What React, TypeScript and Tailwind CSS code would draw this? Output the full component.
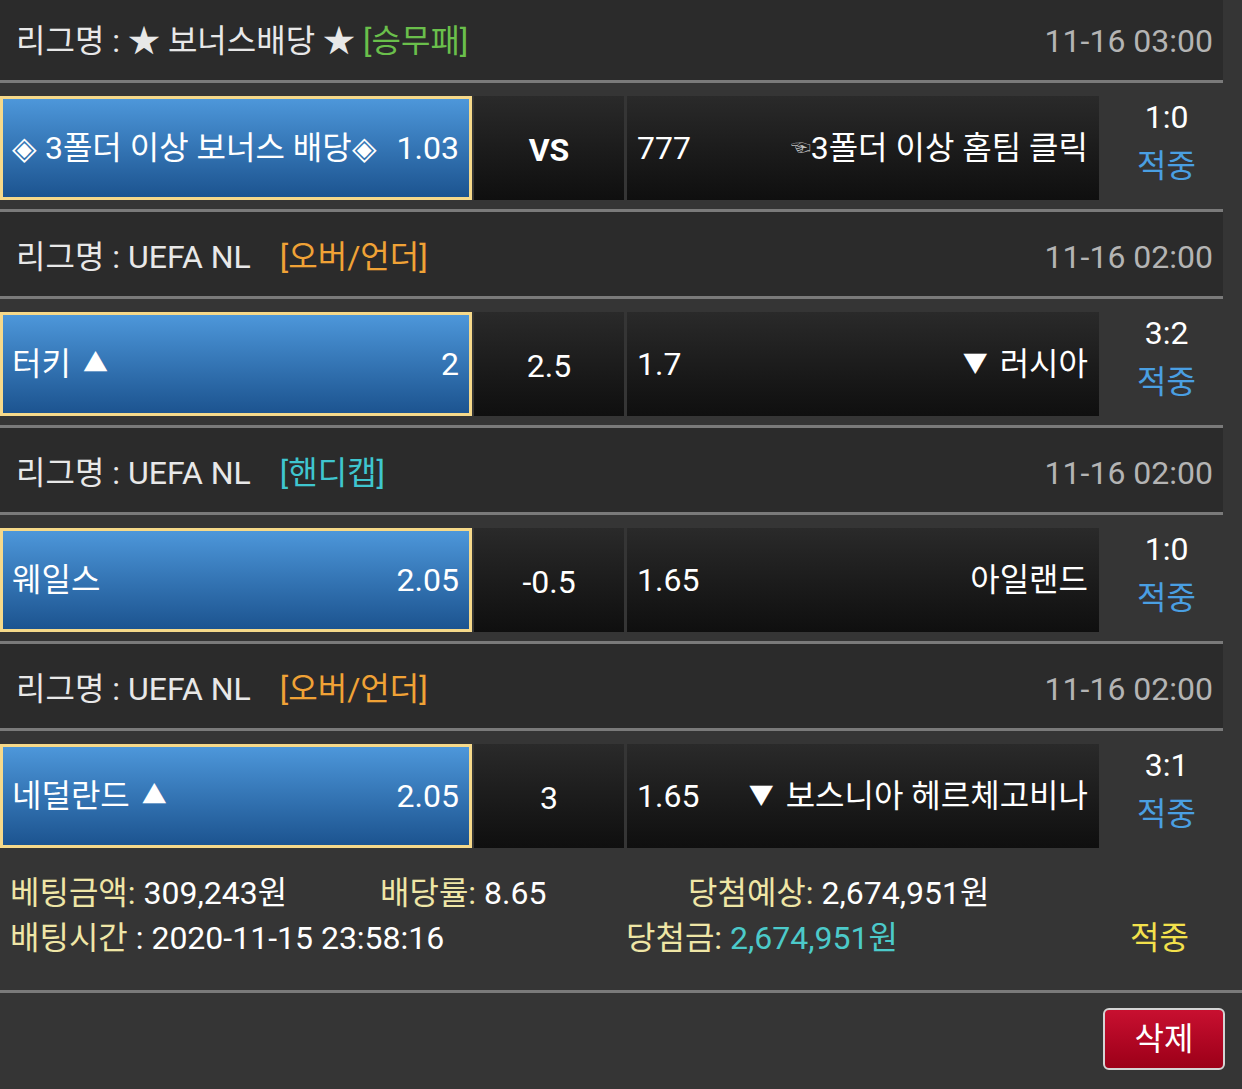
const font = "font-['Roboto','Noto_Sans_CJK_KR',sans-serif]"

type Match = {
  league: string
  tag: string
  tagColor: string
  tagGap: string
  date: string
  home: React.ReactNode
  homeOdds: string
  mid: string
  midBold?: boolean
  awayOdds: string
  away: React.ReactNode
  score: string
}

function Up() {
  return <span className="text-[25px] ml-[12px]">▲</span>
}

function Down() {
  return <span className="text-[25px] mr-[12px]">▼</span>
}

const matches: Match[] = [
  {
    league: '리그명 : ★ 보너스배당 ★',
    tag: '[승무패]',
    tagColor: 'text-[#6abf4b]',
    tagGap: 'ml-[8px]',
    date: '11-16 03:00',
    home: '◈ 3폴더 이상 보너스 배당◈',
    homeOdds: '1.03',
    mid: 'VS',
    midBold: true,
    awayOdds: '777',
    away: (
      <>
        <span className="text-[20px] text-[#bdbdbd]">☜</span>3폴더 이상 홈팀 클릭
      </>
    ),
    score: '1:0',
  },
  {
    league: '리그명 : UEFA NL',
    tag: '[오버/언더]',
    tagColor: 'text-[#f0a236]',
    tagGap: 'ml-[29px]',
    date: '11-16 02:00',
    home: (
      <>
        터키
        <Up />
      </>
    ),
    homeOdds: '2',
    mid: '2.5',
    awayOdds: '1.7',
    away: (
      <>
        <Down />
        러시아
      </>
    ),
    score: '3:2',
  },
  {
    league: '리그명 : UEFA NL',
    tag: '[핸디캡]',
    tagColor: 'text-[#3fc6cf]',
    tagGap: 'ml-[29px]',
    date: '11-16 02:00',
    home: '웨일스',
    homeOdds: '2.05',
    mid: '-0.5',
    awayOdds: '1.65',
    away: '아일랜드',
    score: '1:0',
  },
  {
    league: '리그명 : UEFA NL',
    tag: '[오버/언더]',
    tagColor: 'text-[#f0a236]',
    tagGap: 'ml-[29px]',
    date: '11-16 02:00',
    home: (
      <>
        네덜란드
        <Up />
      </>
    ),
    homeOdds: '2.05',
    mid: '3',
    awayOdds: '1.65',
    away: (
      <>
        <Down />
        보스니아 헤르체고비나
      </>
    ),
    score: '3:1',
  },
]

function LeagueHeader({ m }: { m: Match }) {
  return (
    <div className="w-[1223px] h-[90px] border-y-[3px] border-[#7a7a7a] bg-[#2b2b2b] flex items-center justify-between pl-[16px] pr-[10px] pt-[6px]">
      <div className="flex items-center text-[#e8e8e8]">
        <span>{m.league}</span>
        <span className={`${m.tagGap} ${m.tagColor}`}>{m.tag}</span>
      </div>
      <span className="text-[#b4b4b4]">{m.date}</span>
    </div>
  )
}

function MatchRow({ m }: { m: Match }) {
  return (
    <div className="flex items-start pt-[13px] pb-[9px]">
      <div className="w-[472px] h-[104px] border-[3px] border-[#f6d98a] bg-gradient-to-b from-[#4d97da] to-[#1c5490] flex items-center justify-between pl-[9px] pr-[10px] text-white">
        <span className="flex items-center">{m.home}</span>
        <span>{m.homeOdds}</span>
      </div>
      <div
        className={`ml-[2px] w-[150px] h-[104px] bg-gradient-to-b from-[#2a2a2a] to-[#0f0f0f] flex items-center justify-center text-white pt-[4px] ${
          m.midBold ? 'font-bold' : ''
        }`}
      >
        {m.mid}
      </div>
      <div className="ml-[3px] w-[472px] h-[104px] bg-gradient-to-b from-[#2a2a2a] to-[#0f0f0f] flex items-center justify-between pl-[10px] pr-[11px] text-white">
        <span>{m.awayOdds}</span>
        <span className="flex items-center">{m.away}</span>
      </div>
      <div className="flex-1 -mt-[2px] pr-[8px] flex flex-col items-center leading-[46px]">
        <span className="text-white">{m.score}</span>
        <span className="text-[#4a9fe2] mt-[3px]">적중</span>
      </div>
    </div>
  )
}

export default function App() {
  return (
    <div className={`min-h-screen w-[1242px] bg-[#353535] overflow-hidden text-[32px] ${font}`}>
      <div className="-mt-[7px]">
        {matches.map((m, i) => (
          <div key={i}>
            <LeagueHeader m={m} />
            <MatchRow m={m} />
          </div>
        ))}
      </div>

      <div className="pl-[10px] pt-[14px] pb-[29px] leading-[45px] border-b-[3px] border-[#7a7a7a] text-white">
        <div className="flex">
          <span className="w-[370px]">
            <span className="text-[#efe6a6]">베팅금액:</span> 309,243원
          </span>
          <span className="w-[308px]">
            <span className="text-[#efe6a6]">배당률:</span> 8.65
          </span>
          <span>
            <span className="text-[#efe6a6]">당첨예상:</span> 2,674,951원
          </span>
        </div>
        <div className="flex">
          <span className="w-[616px]">
            <span className="text-[#efe6a6]">배팅시간</span> : 2020-11-15 23:58:16
          </span>
          <span className="w-[504px]">
            <span className="text-[#efe6a6]">당첨금:</span> <span className="text-[#4ccaca]">2,674,951원</span>
          </span>
          <span className="text-[#f3e14c]">적중</span>
        </div>
      </div>

      <div className="flex justify-end pt-[15px] pr-[17px]">
        <button className="w-[122px] h-[62px] rounded-[6px] border-2 border-[#d4d4d4] bg-gradient-to-b from-[#c81030] to-[#9c0018] text-white flex items-center justify-center">
          삭제
        </button>
      </div>
    </div>
  )
}
